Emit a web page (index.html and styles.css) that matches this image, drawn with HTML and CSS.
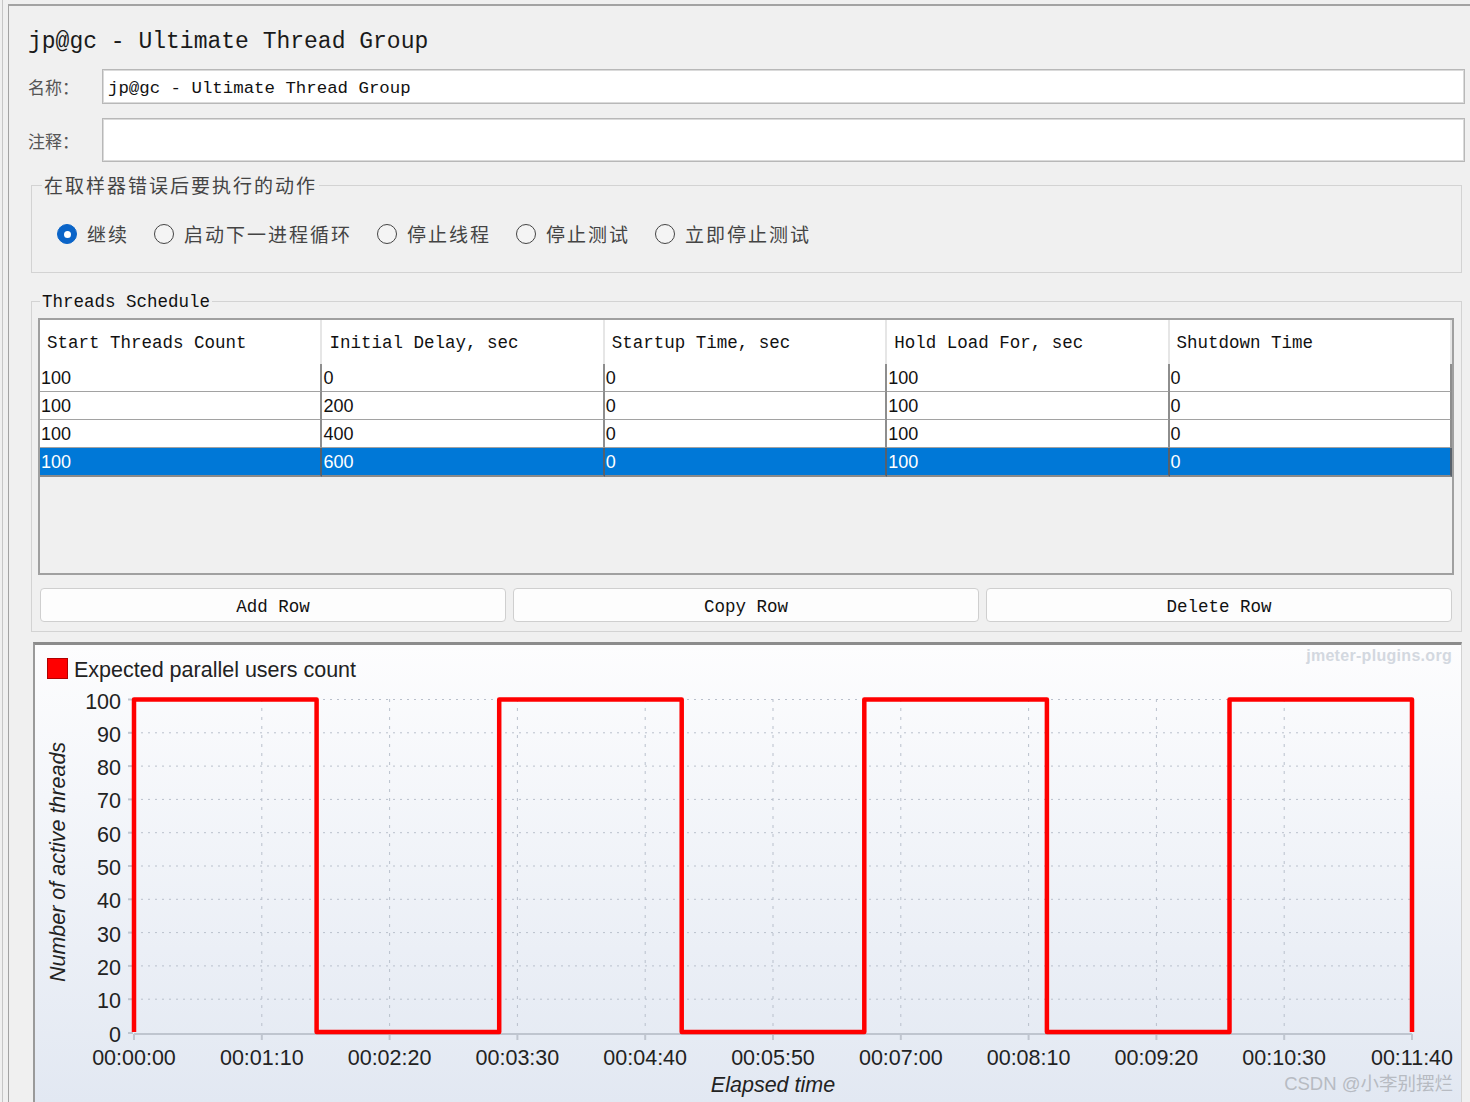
FILE: index.html
```html
<!DOCTYPE html>
<html lang="zh">
<head>
<meta charset="utf-8">
<title>jp@gc - Ultimate Thread Group</title>
<link rel="stylesheet" href="styles.css">
</head>
<body>
<div class="app">
  <div class="rail"></div>
  <div class="frame">
    <h1 class="title">jp@gc - Ultimate Thread Group</h1>
    <div class="field-row">
      <label class="lbl">名称：</label>
      <div class="input">jp@gc - Ultimate Thread Group</div>
    </div>
    <div class="field-row comment-row">
      <label class="lbl">注释：</label>
      <div class="input tall"></div>
    </div>

    <fieldset class="group err-group">
      <legend class="cjk-legend">在取样器错误后要执行的动作</legend>
      <div class="radios">
        <span class="radio-item"><span class="radio on"></span><span class="rlabel">继续</span></span>
        <span class="radio-item"><span class="radio"></span><span class="rlabel">启动下一进程循环</span></span>
        <span class="radio-item"><span class="radio"></span><span class="rlabel">停止线程</span></span>
        <span class="radio-item"><span class="radio"></span><span class="rlabel">停止测试</span></span>
        <span class="radio-item"><span class="radio"></span><span class="rlabel">立即停止测试</span></span>
      </div>
    </fieldset>

    <fieldset class="group sched-group">
      <legend class="mono-legend">Threads Schedule</legend>
      <div class="table">
        <div class="thead">
          <div class="th">Start Threads Count</div>
          <div class="th">Initial Delay, sec</div>
          <div class="th">Startup Time, sec</div>
          <div class="th">Hold Load For, sec</div>
          <div class="th">Shutdown Time</div>
        </div>
        <div class="tr">
          <div class="td">100</div><div class="td">0</div><div class="td">0</div><div class="td">100</div><div class="td">0</div>
        </div>
        <div class="tr">
          <div class="td">100</div><div class="td">200</div><div class="td">0</div><div class="td">100</div><div class="td">0</div>
        </div>
        <div class="tr">
          <div class="td">100</div><div class="td">400</div><div class="td">0</div><div class="td">100</div><div class="td">0</div>
        </div>
        <div class="tr sel">
          <div class="td">100</div><div class="td">600</div><div class="td">0</div><div class="td">100</div><div class="td">0</div>
        </div>
      </div>
      <div class="buttons">
        <div class="btn">Add Row</div>
        <div class="btn">Copy Row</div>
        <div class="btn">Delete Row</div>
      </div>
    </fieldset>

    <div class="chart">
      <svg class="chart-svg" width="1426" height="457" viewBox="0 0 1426 457" xmlns="http://www.w3.org/2000/svg">
        <g class="grid-h" stroke="#b9c0cc" stroke-width="1" stroke-dasharray="2 5">
          <line x1="99" y1="54.5" x2="1377" y2="54.5"/>
          <line x1="99" y1="87.8" x2="1377" y2="87.8"/>
          <line x1="99" y1="121.1" x2="1377" y2="121.1"/>
          <line x1="99" y1="154.4" x2="1377" y2="154.4"/>
          <line x1="99" y1="187.7" x2="1377" y2="187.7"/>
          <line x1="99" y1="221" x2="1377" y2="221"/>
          <line x1="99" y1="254.3" x2="1377" y2="254.3"/>
          <line x1="99" y1="287.6" x2="1377" y2="287.6"/>
          <line x1="99" y1="320.9" x2="1377" y2="320.9"/>
          <line x1="99" y1="354.2" x2="1377" y2="354.2"/>
        </g>
        <g class="grid-v" stroke="#b9c0cc" stroke-width="1" stroke-dasharray="3 6">
          <line x1="226.8" y1="54" x2="226.8" y2="387"/>
          <line x1="354.6" y1="54" x2="354.6" y2="387"/>
          <line x1="482.4" y1="54" x2="482.4" y2="387"/>
          <line x1="610.2" y1="54" x2="610.2" y2="387"/>
          <line x1="738" y1="54" x2="738" y2="387"/>
          <line x1="865.8" y1="54" x2="865.8" y2="387"/>
          <line x1="993.6" y1="54" x2="993.6" y2="387"/>
          <line x1="1121.4" y1="54" x2="1121.4" y2="387"/>
          <line x1="1249.2" y1="54" x2="1249.2" y2="387"/>
        </g>
        <g class="axis" stroke="#bfc5cf" stroke-width="2">
          <line x1="99" y1="389" x2="1377" y2="389"/>
          <line x1="99" y1="389" x2="99" y2="395"/>
          <line x1="226.8" y1="389" x2="226.8" y2="395"/>
          <line x1="354.6" y1="389" x2="354.6" y2="395"/>
          <line x1="482.4" y1="389" x2="482.4" y2="395"/>
          <line x1="610.2" y1="389" x2="610.2" y2="395"/>
          <line x1="738" y1="389" x2="738" y2="395"/>
          <line x1="865.8" y1="389" x2="865.8" y2="395"/>
          <line x1="993.6" y1="389" x2="993.6" y2="395"/>
          <line x1="1121.4" y1="389" x2="1121.4" y2="395"/>
          <line x1="1249.2" y1="389" x2="1249.2" y2="395"/>
          <line x1="1377" y1="389" x2="1377" y2="395"/>
        </g>
        <g class="ticks-y" stroke="#bfc5cf" stroke-width="2">
          <line x1="93" y1="54.5" x2="98" y2="54.5"/>
          <line x1="93" y1="87.8" x2="98" y2="87.8"/>
          <line x1="93" y1="121.1" x2="98" y2="121.1"/>
          <line x1="93" y1="154.4" x2="98" y2="154.4"/>
          <line x1="93" y1="187.7" x2="98" y2="187.7"/>
          <line x1="93" y1="221" x2="98" y2="221"/>
          <line x1="93" y1="254.3" x2="98" y2="254.3"/>
          <line x1="93" y1="287.6" x2="98" y2="287.6"/>
          <line x1="93" y1="320.9" x2="98" y2="320.9"/>
          <line x1="93" y1="354.2" x2="98" y2="354.2"/>
          <line x1="93" y1="388" x2="98" y2="388"/>
        </g>
        <path class="series" d="M99,387 L99,54.5 L281.6,54.5 L281.6,387 L464.2,387 L464.2,54.5 L646.7,54.5 L646.7,387 L829.3,387 L829.3,54.5 L1011.9,54.5 L1011.9,387 L1194.5,387 L1194.5,54.5 L1377,54.5 L1377,387" fill="none" stroke="#ff0000" stroke-width="4.5" stroke-linejoin="round"/>

        <rect x="12.5" y="13.5" width="20" height="20" fill="#ff0000" stroke="#b00000" stroke-width="1"/>
        <text class="legend-text" x="39" y="32">Expected parallel users count</text>
        <text class="brand" x="1417" y="16">jmeter-plugins.org</text>

        <g class="ylabels">
          <text x="86" y="63.5">100</text>
          <text x="86" y="96.8">90</text>
          <text x="86" y="130.1">80</text>
          <text x="86" y="163.4">70</text>
          <text x="86" y="196.7">60</text>
          <text x="86" y="230">50</text>
          <text x="86" y="263.3">40</text>
          <text x="86" y="296.6">30</text>
          <text x="86" y="329.9">20</text>
          <text x="86" y="363.2">10</text>
          <text x="86" y="397">0</text>
        </g>
        <g class="xlabels">
          <text x="99" y="420">00:00:00</text>
          <text x="226.8" y="420">00:01:10</text>
          <text x="354.6" y="420">00:02:20</text>
          <text x="482.4" y="420">00:03:30</text>
          <text x="610.2" y="420">00:04:40</text>
          <text x="738" y="420">00:05:50</text>
          <text x="865.8" y="420">00:07:00</text>
          <text x="993.6" y="420">00:08:10</text>
          <text x="1121.4" y="420">00:09:20</text>
          <text x="1249.2" y="420">00:10:30</text>
          <text x="1377" y="420">00:11:40</text>
        </g>
        <text class="axis-title" x="738" y="447">Elapsed time</text>
        <text class="axis-title" transform="translate(30 217) rotate(-90)" x="0" y="0">Number of active threads</text>
        <text class="watermark" x="1418" y="445">CSDN @小李别摆烂</text>
      </svg>
    </div>
  </div>
</div>
</body>
</html>
```

FILE: styles.css
```css
* { box-sizing: border-box; }
html, body { margin: 0; padding: 0; }
body {
  background: #f0f0f0;
  width: 1470px;
  height: 1102px;
  overflow: hidden;
  font-family: "Liberation Sans", Arial, sans-serif;
  color: #111;
}
.app {
  display: flex;
  height: 1102px;
  padding-left: 2px;
}
.rail {
  width: 6px;
  border-left: 1px solid #c6c6c6;
}
.frame {
  flex: 1;
  min-width: 0;
  margin-top: 4px;
  border-top: 2px solid #a3a3a3;
  border-left: 1px solid #a3a3a3;
  display: flex;
  flex-direction: column;
}
.title {
  margin: 0 0 0 19px;
  padding-top: 22px;
  height: 48px;
  font: normal 23px/28px "Liberation Mono", monospace;
  color: #1a1a1a;
}
.field-row {
  display: flex;
  align-items: center;
  margin: 15px 5px 0 19px;
}
.field-row.comment-row { margin-top: 14px; }
.lbl {
  width: 74px;
  font: 17px/22px "Noto Sans CJK SC", sans-serif;
  color: #555;
  padding-top: 1px;
}
.input {
  flex: 1;
  height: 35px;
  background: #fff;
  border: 1px solid #b8b8b8;
  box-shadow: inset 0 0 0 1px #dadada;
  padding: 3px 0 0 5px;
  font: 17.4px/31px "Liberation Mono", monospace;
  color: #111;
  white-space: pre;
}
.input.tall { height: 44px; }

.group {
  margin: 11px 8px 0 22px;
  border: 1px solid #d3d3d3;
  padding: 25px 0 26px 0;
  min-width: 0;
}
.cjk-legend {
  margin-left: 10px;
  padding: 0 2px;
  font: 19px/24px "Noto Sans CJK SC", sans-serif;
  letter-spacing: 2px;
  color: #444;
}
.radios {
  display: flex;
  align-items: center;
  height: 24px;
  margin-left: 25px;
}
.radio-item {
  display: flex;
  align-items: center;
  margin-right: 25px;
}
.radio {
  width: 20px;
  height: 20px;
  border-radius: 50%;
  border: 1.5px solid #444;
  background: #f4f4f4;
  margin-right: 10px;
  position: relative;
}
.radio.on {
  background: #0a64c8;
  border-color: #0a64c8;
}
.radio.on::after {
  content: "";
  position: absolute;
  left: 50%;
  top: 50%;
  width: 7px;
  height: 7px;
  margin: -3.5px 0 0 -3.5px;
  border-radius: 50%;
  background: #fff;
}
.rlabel {
  font: 19px/24px "Noto Sans CJK SC", sans-serif;
  letter-spacing: 2px;
  color: #444;
}

.sched-group {
  margin-top: 16px;
  padding: 5px 0 9px 0;
}
.mono-legend {
  margin-left: 8px;
  padding: 2px 2px 0;
  font: 17.5px/22px "Liberation Mono", monospace;
  color: #111;
}
.table {
  margin: 0 7px 0 6px;
  height: 257px;
  border: 2px solid #a0a0a0;
  background: #f0f0f0;
}
.thead, .tr {
  display: grid;
  grid-template-columns: repeat(5, 1fr);
}
.thead {
  height: 44px;
  background: #fff;
}
.th {
  border-right: 2px solid #e6e6e6;
  padding: 3px 0 0 7px;
  font: 17.5px/41px "Liberation Mono", monospace;
  white-space: pre;
  color: #111;
}
.tr { height: 28px; }
.td {
  background: #fff;
  border-right: 2px solid #8e8e8e;
  border-bottom: 2px solid #a2a2a2;
  padding: 2px 0 0 1px;
  font: 18px/25px "Liberation Sans", Arial, sans-serif;
  color: #111;
}
.tr.sel .td {
  background: #0078d7;
  color: #fff;
  border-right-color: #55606c;
  border-bottom-color: #8a8a8a;
}
.buttons {
  display: flex;
  gap: 7px;
  margin: 13px 9px 0 8px;
}
.btn {
  flex: 1;
  height: 34px;
  display: flex;
  align-items: center;
  justify-content: center;
  padding-top: 3px;
  background: #fdfdfd;
  border: 1px solid #cfcfcf;
  border-radius: 4px;
  font: 17.5px "Liberation Mono", monospace;
  color: #111;
}

.chart {
  flex: 1;
  margin: 10px 8px 0 24px;
  border-top: 3px solid #8c8c8c;
  border-left: 2px solid #9a9a9a;
  border-right: 1px solid #d2d2d2;
  background: linear-gradient(#fdfdfe, #e2e8f2);
  overflow: hidden;
}
.chart-svg { display: block; }
.chart-svg text {
  font-family: "Liberation Sans", Arial, sans-serif;
  font-size: 21.5px;
  fill: #222;
}
.chart-svg .ylabels text { text-anchor: end; }
.chart-svg .xlabels text { text-anchor: middle; }
.chart-svg .axis-title { font-style: italic; text-anchor: middle; }
.chart-svg .brand {
  font-size: 16px;
  font-weight: bold;
  fill: #d3d8e0;
  text-anchor: end;
  letter-spacing: 0.3px;
}
.chart-svg .watermark {
  font-family: "Liberation Sans", "Noto Sans CJK SC", sans-serif;
  font-size: 18.5px;
  fill: #b7bbc2;
  text-anchor: end;
}
```
